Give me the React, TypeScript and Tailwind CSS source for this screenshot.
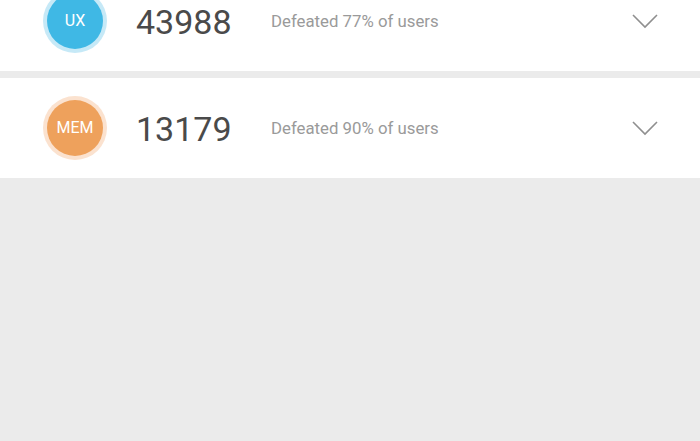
const rows = [
  { label: "UX", score: "43988", pct: "77", fill: "bg-[#3fb8e5]", ring: "bg-[#c6e9f7]" },
  { label: "MEM", score: "13179", pct: "90", fill: "bg-[#eea15c]", ring: "bg-[#fbe2cf]" },
];

function ScoreRow({ label, score, pct, fill, ring }: (typeof rows)[number]) {
  return (
    <div className="h-[100px] bg-white flex items-center pl-[43px] pr-[42px]">
      <div className={`w-16 h-16 rounded-full flex items-center justify-center ${ring}`}>
        <div className={`w-[56px] h-[56px] rounded-full flex items-center justify-center text-white text-[16px] ${fill}`}>
          {label}
        </div>
      </div>
      <div className="ml-[29px] w-[135px] text-[34px] text-[#4a4a4a] leading-none pt-[2px]">{score}</div>
      <div className="text-[16.8px] text-[#9a9a9a] pt-[2px]">Defeated {pct}% of users</div>
      <svg className="ml-auto" width="26" height="16" viewBox="0 0 26 16" fill="none">
        <path d="M1 2 L13 14 L25 2" stroke="#8f8f8f" strokeWidth="1.6" />
      </svg>
    </div>
  );
}

export default function App() {
  return (
    <div className="w-[700px] h-[441px] overflow-hidden bg-[#ebebeb]" style={{ fontFamily: "Roboto, 'Noto Sans', sans-serif" }}>
      <div className="-mt-[29px] flex flex-col gap-[7px]">
        {rows.map((r) => (
          <ScoreRow key={r.label} {...r} />
        ))}
      </div>
    </div>
  );
}
